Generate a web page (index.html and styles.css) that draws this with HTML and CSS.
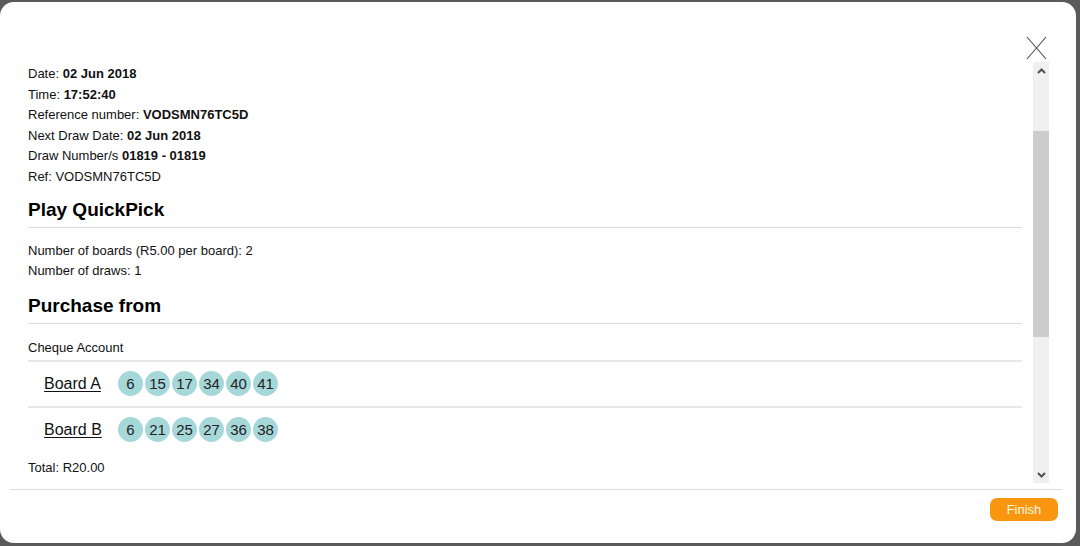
FILE: index.html
```html
<!DOCTYPE html>
<html>
<head>
<meta charset="utf-8">
<link rel="stylesheet" href="styles.css">
</head>
<body>
<div class="dialog">
  <div class="top">
    <svg class="close" width="21" height="24" viewBox="0 0 21 24"><line x1="1" y1="1" x2="20" y2="23" stroke="#4a4a4a" stroke-width="1.1"/><line x1="20" y1="1" x2="1" y2="23" stroke="#4a4a4a" stroke-width="1.1"/></svg>
  </div>
  <div class="main">
    <div class="content">
      <div class="info">
        <div>Date: <b>02 Jun 2018</b></div>
        <div>Time: <b>17:52:40</b></div>
        <div>Reference number: <b>VODSMN76TC5D</b></div>
        <div>Next Draw Date: <b>02 Jun 2018</b></div>
        <div>Draw Number/s <b>01819 - 01819</b></div>
        <div>Ref: VODSMN76TC5D</div>
      </div>
      <h2 class="head first">Play QuickPick</h2>
      <div class="info gap">
        <div>Number of boards (R5.00 per board): 2</div>
        <div>Number of draws: 1</div>
      </div>
      <h2 class="head second">Purchase from</h2>
      <div class="info account">Cheque Account</div>
      <div class="board board-a">
        <span class="label">Board A</span>
        <div class="balls"><span>6</span><span>15</span><span>17</span><span>34</span><span>40</span><span>41</span></div>
      </div>
      <div class="board board-b">
        <span class="label">Board B</span>
        <div class="balls"><span>6</span><span>21</span><span>25</span><span>27</span><span>36</span><span>38</span></div>
      </div>
      <div class="info total">Total: R20.00</div>
    </div>
    <div class="scrollbar">
      <div class="arrow"><svg width="9" height="6" viewBox="0 0 9 6"><polyline points="1,5 4.5,1.5 8,5" fill="none" stroke="#505050" stroke-width="2"/></svg></div>
      <div class="pre"></div>
      <div class="thumb"></div>
      <div class="rest"></div>
      <div class="arrow"><svg width="9" height="6" viewBox="0 0 9 6"><polyline points="1,1 4.5,4.5 8,1" fill="none" stroke="#505050" stroke-width="2"/></svg></div>
    </div>
  </div>
  <div class="footer">
    <button class="finish">Finish</button>
  </div>
</div>
</body>
</html>
```
FILE: styles.css
```css
html, body {
  margin: 0;
  padding: 0;
}
body {
  background: #5a5a5a;
  width: 1080px;
  height: 546px;
  overflow: hidden;
  font-family: "Liberation Sans", Arial, sans-serif;
  color: #111;
}
.dialog {
  margin: 2px 4px 0 0;
  height: 541px;
  background: #fff;
  border-radius: 14px;
  display: flex;
  flex-direction: column;
}
.top {
  height: 60px;
  display: flex;
  justify-content: flex-end;
  align-items: flex-start;
  padding-right: 29px;
  box-sizing: border-box;
  padding-top: 34px;
}
.close {
  display: block;
}
.main {
  height: 421px;
  display: flex;
  padding-left: 28px;
}
.content {
  width: 994px;
  padding-top: 2px;
}
.info {
  font-size: 13px;
  line-height: 20.6px;
}
.head {
  font-size: 19px;
  line-height: 24px;
  font-weight: bold;
  padding-bottom: 5px;
  border-bottom: 1px solid #dcdcdc;
  color: #000;
}
.head.first {
  margin: 10px 0 0;
}
.head.second {
  margin: 12px 0 0;
}
.gap {
  margin-top: 13px;
}
.account {
  margin-top: 14px;
  padding-bottom: 2px;
  border-bottom: 2px solid #e8e8e8;
}
.board {
  box-sizing: border-box;
  padding-left: 16px;
  display: flex;
  align-items: flex-start;
}
.board-a {
  height: 46px;
  padding-top: 9px;
  border-bottom: 2px solid #e8e8e8;
}
.board-b {
  height: 43px;
  padding-top: 9px;
}
.label {
  font-size: 16px;
  line-height: 25px;
  text-decoration: underline;
  text-underline-offset: 2px;
  width: 58px;
  margin-right: 16px;
  color: #111;
}
.balls {
  display: flex;
  gap: 2px;
}
.balls span {
  width: 25px;
  height: 25px;
  border-radius: 50%;
  background: #a7d8d9;
  font-size: 15px;
  line-height: 25px;
  text-align: center;
  color: #222;
}
.total {
  margin-top: 7px;
}
.scrollbar {
  margin-left: 11px;
  width: 16px;
  background: #f0f0f0;
  display: flex;
  flex-direction: column;
}
.arrow {
  height: 17px;
  display: flex;
  align-items: center;
  justify-content: center;
}
.pre {
  height: 52px;
}
.thumb {
  height: 206px;
  background: #cdcdcd;
}
.rest {
  flex: 1;
}
.footer {
  margin: 6px 14px 0 10px;
  border-top: 1px solid #dcdcdc;
  display: flex;
  justify-content: flex-end;
  padding: 8px 4px 0 0;
}
.finish {
  width: 68px;
  height: 23px;
  border: none;
  border-radius: 7px;
  background: #f8960f;
  color: #fff6e0;
  font-family: "Liberation Sans", Arial, sans-serif;
  font-size: 13px;
  padding: 0;
}
```
